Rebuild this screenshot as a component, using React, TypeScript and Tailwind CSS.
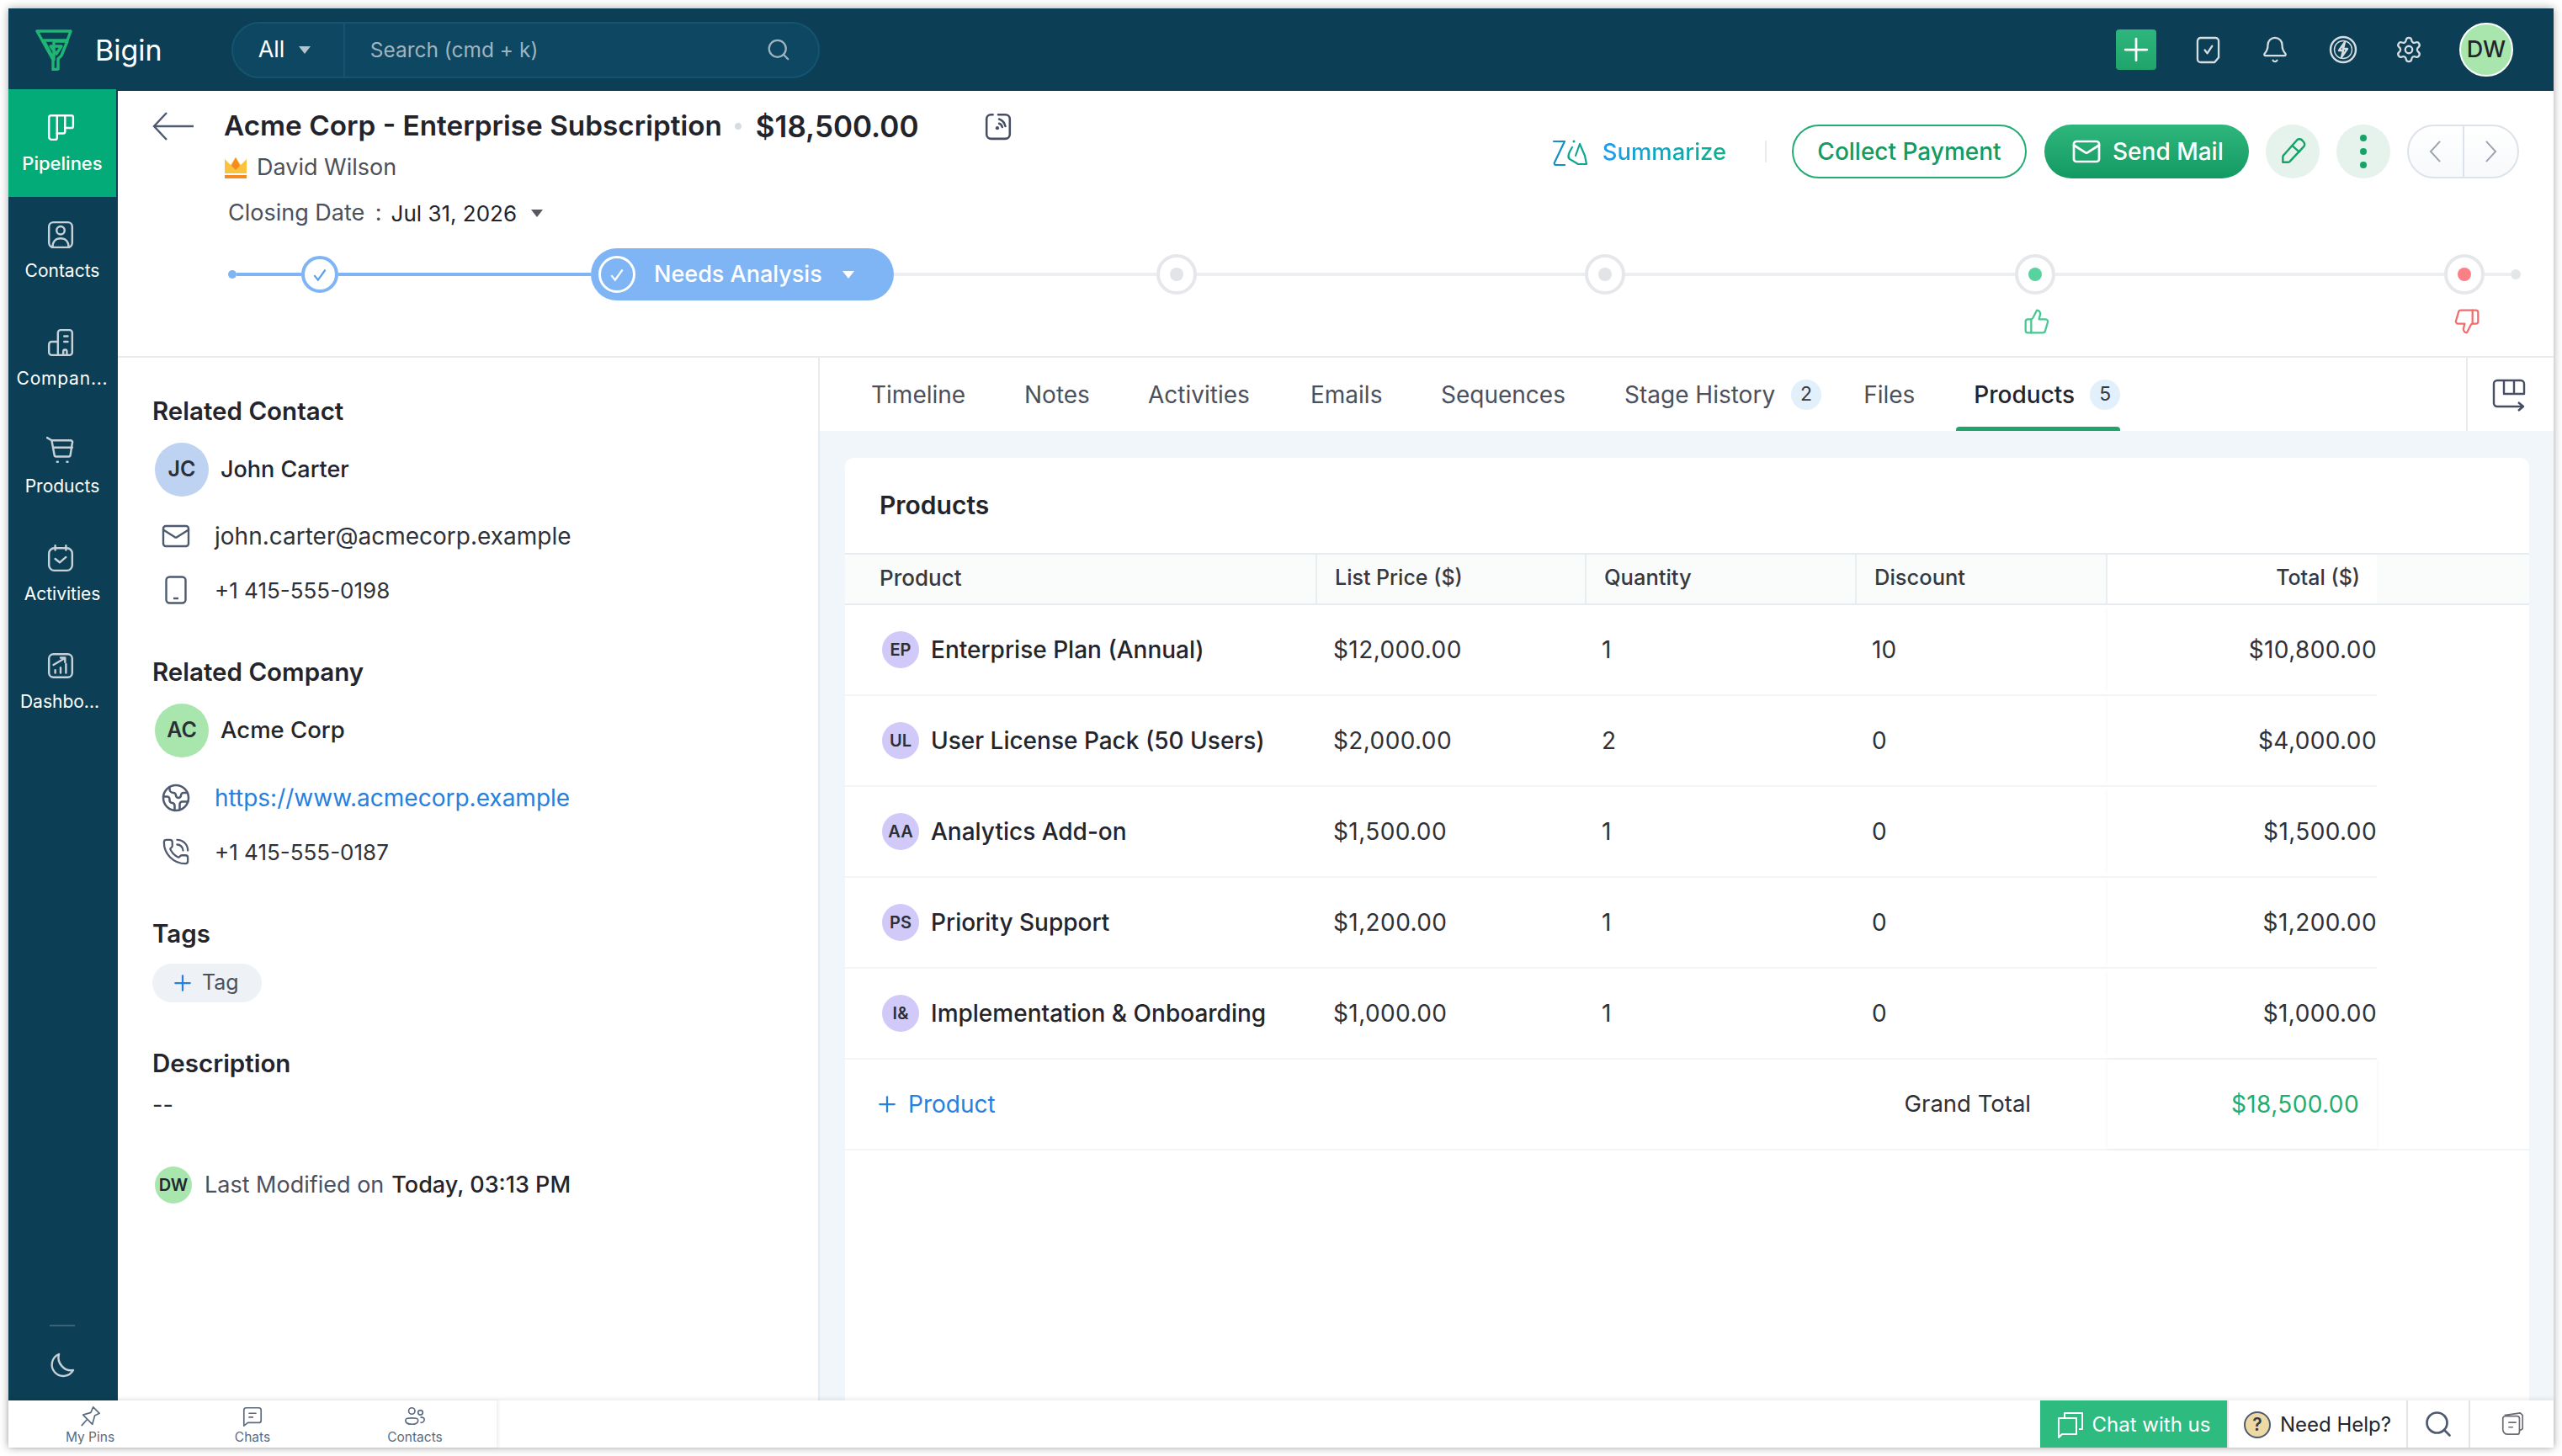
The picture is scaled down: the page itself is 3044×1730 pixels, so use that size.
import type { ReactNode } from "react";
import { Bell, Earth, Mail, PhoneCall, Plus, Search, Settings, ThumbsDown, ThumbsUp } from "lucide-react";

type NavItem = { label: string; icon: ReactNode; active?: boolean; labelClass?: string };

type ProductRow = {
  code: string;
  name: string;
  price: string;
  qty: string;
  discount: string;
  total: string;
};

const font = "font-['Inter','Liberation_Sans',sans-serif]";

const navItems: NavItem[] = [
  {
    label: "Pipelines",
    active: true,
    labelClass: "text-[22px] font-medium -mt-[2px]",
    icon: (
      <>
        <path d="M3 5a2 2 0 0 1 2-2h23a2 2 0 0 1 2 2v10a2 2 0 0 1-2 2h-7" />
        <path d="M21 3v18a2 2 0 0 1-2 2h-7" />
        <path d="M12 3v25a2 2 0 0 1-2 2H6a3 3 0 0 1-3-3V5" />
      </>
    ),
  },
  {
    label: "Contacts",
    icon: (
      <>
        <rect x="3" y="2" width="26" height="28" rx="5" />
        <circle cx="16" cy="11" r="4.5" />
        <path d="M7 30c0-7 4-10 9-10s9 3 9 10" />
      </>
    ),
  },
  {
    label: "Compan...",
    labelClass: "tracking-[0.8px]",
    icon: (
      <>
        <path d="M13 30V5a3 3 0 0 1 3-3h10a3 3 0 0 1 3 3v22a3 3 0 0 1-3 3H6a3 3 0 0 1-3-3v-9a3 3 0 0 1 3-3h7" />
        <path d="M20 9h4M20 15h4M19 30v-4a2 2 0 0 1 4 0v4" />
      </>
    ),
  },
  {
    label: "Products",
    icon: (
      <>
        <path d="M1 2l5 3 3 16a2 2 0 0 0 2 2h14a2 2 0 0 0 2-2l2-13a2 2 0 0 0-2-3H6" />
        <path d="M8 13h21M12 29h1M23 29h1" />
      </>
    ),
  },
  {
    label: "Activities",
    icon: (
      <>
        <rect x="3" y="5" width="26" height="25" rx="6" />
        <path d="M10 2v5M22 2v5M10 17l5 4 7-6" />
      </>
    ),
  },
  {
    label: "Dashbo...",
    labelClass: "mr-[6px]",
    icon: (
      <>
        <rect x="3" y="3" width="26" height="26" rx="5" />
        <path d="M10 24v-3M16 24v-6M22 24V14M8 15l12-7M16 7h5v5" />
      </>
    ),
  },
];

const tabs = [
  { label: "Timeline", width: "w-[182px]" },
  { label: "Notes", width: "w-[147px]" },
  { label: "Activities", width: "w-[193px]" },
  { label: "Emails", width: "w-[155px]" },
  { label: "Sequences", width: "w-[218px]" },
];

const rows: ProductRow[] = [
  { code: "EP", name: "Enterprise Plan (Annual)", price: "$12,000.00", qty: "1", discount: "10", total: "$10,800.00" },
  { code: "UL", name: "User License Pack (50 Users)", price: "$2,000.00", qty: "2", discount: "0", total: "$4,000.00" },
  { code: "AA", name: "Analytics Add-on", price: "$1,500.00", qty: "1", discount: "0", total: "$1,500.00" },
  { code: "PS", name: "Priority Support", price: "$1,200.00", qty: "1", discount: "0", total: "$1,200.00" },
  { code: "I&", name: "Implementation & Onboarding", price: "$1,000.00", qty: "1", discount: "0", total: "$1,000.00" },
];

const columns = "grid grid-cols-[561px_320px_321px_298px_320px]";

function Caret({ className }: { className: string }) {
  return (
    <svg viewBox="0 0 14 9" className={className}>
      <polygon points="0,0 14,0 7,9" fill="currentColor" />
    </svg>
  );
}

function TopBar() {
  return (
    <div className="flex h-[98px] shrink-0 items-center bg-[#0c3f55]">
      <svg viewBox="0 0 46 50" className="ml-[32px] h-[50px] w-[46px]" fill="none" stroke="#1fb573" strokeWidth="3.4" strokeLinejoin="round">
        <path d="M2 3h40l-4 11H10l12 23V15h16l-7 17-4 4v12l-6 1V37z" />
        <path d="M18 21h13l-6 9z" />
      </svg>
      <span className="ml-[25px] text-[34px] text-white">Bigin</span>
      <div className="ml-[82px] flex h-[67px] w-[699px] items-center rounded-full border-2 border-[#155470] bg-[#0e4761]">
        <div className="flex h-full w-[133px] items-center border-r-2 border-[#155470] pl-[30px]">
          <span className="text-[27px] text-white">All</span>
          <Caret className="ml-[17px] h-[9px] w-[14px] text-[#b4c4cc]" />
        </div>
        <span className="ml-[30px] flex-1 text-[24.5px] text-[#9fb4bf]">Search (cmd + k)</span>
        <Search className="mr-[32px] h-[30px] w-[30px] text-[#9fb4bf]" strokeWidth={1.8} />
      </div>
      <div className="ml-auto flex items-center pr-[48px]">
        <div className="flex h-[48px] w-[48px] items-center justify-center rounded-[4px] bg-gradient-to-b from-[#2eb67d] to-[#1fa56c]">
          <Plus className="h-[44px] w-[44px] text-white" strokeWidth={1.5} />
        </div>
        <svg viewBox="0 0 30 34" className="ml-[47px] h-[33px] w-[29px]" fill="none" stroke="#d5dde1" strokeWidth="2.4" strokeLinecap="round" strokeLinejoin="round">
          <path d="M6 2h18a4 4 0 0 1 4 4v20l-5 6H6a4 4 0 0 1-4-4V6a4 4 0 0 1 4-4z" />
          <path d="M11 17l3 4 6-9" />
        </svg>
        <Bell className="ml-[48px] h-[34px] w-[34px] text-[#d5dde1]" strokeWidth={1.6} />
        <svg viewBox="0 0 34 34" className="ml-[47px] h-[34px] w-[34px]" fill="none" stroke="#d5dde1" strokeWidth="2.4" strokeLinejoin="round">
          <circle cx="17" cy="17" r="15" />
          <circle cx="17" cy="17" r="10.5" strokeWidth="1.4" />
          <path d="M19 8l-7 10h5l-2 8 7-10h-5z" />
        </svg>
        <Settings className="ml-[44px] h-[34px] w-[34px] text-[#d5dde1]" strokeWidth={1.6} />
        <div className="ml-[43px] flex h-[64px] w-[64px] items-center justify-center rounded-full border-2 border-white bg-[#a8e6ae] text-[27px] font-medium text-[#22262b]">
          DW
        </div>
      </div>
    </div>
  );
}

function Sidebar() {
  return (
    <aside className="relative z-10 flex w-[130px] shrink-0 flex-col bg-[#0c3f55]">
      <div className="-mt-[2px] flex flex-col">
        {navItems.map((item) => (
          <div
            key={item.label}
            className={`flex h-[128px] w-[128px] flex-col items-center pt-[28px] ${item.active ? "bg-[#03ab78]" : ""}`}
          >
            <svg
              viewBox="0 0 32 32"
              className="mr-[4px] h-[34px] w-[34px]"
              fill="none"
              stroke={item.active ? "#ffffff" : "#c5d1d6"}
              strokeWidth="2.3"
              strokeLinecap="round"
              strokeLinejoin="round"
            >
              {item.icon}
            </svg>
            <span className={`mt-[13px] text-[21px] leading-[26px] text-white ${item.labelClass ?? ""}`}>{item.label}</span>
          </div>
        ))}
      </div>
      <div className="mt-auto flex flex-col items-center pb-[26px] pr-[2px]">
        <div className="h-[2px] w-[30px] bg-[#3a6377]" />
        <svg viewBox="0 0 32 32" className="mt-[30px] h-[32px] w-[32px]" fill="none" stroke="#c5d1d6" strokeWidth="2.4" strokeLinejoin="round">
          <path d="M12 3a13.500 13.500 0 1 0 17 19C19 24 9 14 12 3z" />
        </svg>
      </div>
    </aside>
  );
}

function GreyNode() {
  return (
    <div className="flex h-[48px] w-[48px] shrink-0 items-center justify-center rounded-full border-[4px] border-[#e5e7ea] bg-white">
      <div className="h-[16px] w-[16px] rounded-full bg-[#e2e4e8]" />
    </div>
  );
}

function StageBar() {
  return (
    <div className="ml-[131px] flex h-[62px] items-center">
      <div className="h-[10px] w-[10px] shrink-0 rounded-full bg-[#7fb5f5]" />
      <div className="h-[4px] w-[77px] bg-[#7fb5f5]" />
      <div className="flex h-[44px] w-[44px] shrink-0 items-center justify-center rounded-full border-[4px] border-[#7fb5f5] bg-white">
        <svg viewBox="0 0 20 20" className="h-[22px] w-[22px]" fill="none" stroke="#5d9fe8" strokeWidth="2">
          <path d="M4 11l4 5 8-11" />
        </svg>
      </div>
      <div className="h-[4px] w-[300px] bg-[#7fb5f5]" />
      <div className="flex h-[62px] w-[360px] shrink-0 items-center rounded-full bg-[#7fb5f5] pl-[9px]">
        <div className="flex h-[44px] w-[44px] items-center justify-center rounded-full border-[3px] border-white">
          <svg viewBox="0 0 20 20" className="h-[22px] w-[22px]" fill="none" stroke="#ffffff" strokeWidth="2">
            <path d="M4 11l4 5 8-11" />
          </svg>
        </div>
        <span className="ml-[22px] text-[27px] font-medium text-white">Needs Analysis</span>
        <Caret className="ml-[24px] h-[9px] w-[14px] text-white" />
      </div>
      <div className="h-[4px] w-[312px] bg-[#eceef1]" />
      <GreyNode />
      <div className="h-[4px] w-[461px] bg-[#eceef1]" />
      <GreyNode />
      <div className="h-[4px] w-[463px] bg-[#eceef1]" />
      <div className="relative flex h-[48px] w-[48px] shrink-0 items-center justify-center rounded-full border-[4px] border-[#e5e7ea] bg-white">
        <div className="h-[16px] w-[16px] rounded-full bg-[#58d3a0]" />
        <ThumbsUp className="absolute top-[60px] left-[6px] h-[32px] w-[32px] text-[#45c990]" strokeWidth={1.7} />
      </div>
      <div className="h-[4px] w-[462px] bg-[#eceef1]" />
      <div className="relative flex h-[48px] w-[48px] shrink-0 items-center justify-center rounded-full border-[4px] border-[#e5e7ea] bg-white">
        <div className="h-[16px] w-[16px] rounded-full bg-[#fb8086]" />
        <ThumbsDown className="absolute top-[60px] left-[7px] h-[32px] w-[32px] text-[#f26d6d]" strokeWidth={1.7} />
      </div>
      <div className="h-[4px] w-[31px] bg-[#eceef1]" />
      <div className="h-[12px] w-[12px] shrink-0 rounded-full bg-[#e4e7ea]" />
    </div>
  );
}

function DealHeader() {
  return (
    <header className="flex h-[317px] shrink-0 flex-col border-b-2 border-[#e8ecef]">
      <div className="flex h-[187px] justify-between">
        <div className="flex pl-[41px] pt-[25px]">
          <svg viewBox="0 0 50 34" className="h-[34px] w-[50px]" fill="none" stroke="#4d5a70" strokeWidth="2.4">
            <path d="M49 17H2M17 1L2 17l15 16" />
          </svg>
          <div className="ml-[35px] flex flex-col">
            <div className="flex h-[34px] items-center">
              <span className="text-[33.3px] font-semibold text-[#23242b]">Acme Corp - Enterprise Subscription</span>
              <span className="ml-[15px] h-[8px] w-[8px] rounded-full bg-[#d5dde3]" />
              <span className="ml-[17px] text-[35px] font-semibold text-[#23242b]">$18,500.00</span>
              <svg viewBox="0 0 32 32" className="ml-[78px] h-[34px] w-[34px]" fill="none" stroke="#454e63" strokeWidth="2.4" strokeLinecap="round">
                <path d="M10 3H8a5 5 0 0 0-5 5v17a5 5 0 0 0 5 5h16a5 5 0 0 0 5-5V8a5 5 0 0 0-5-5h-8" />
                <path d="M17 8c3 1 6 4 7 8M17 13c2 .5 3 2 3.500 4" />
                <circle cx="15" cy="18" r="2" fill="#454e63" stroke="none" />
              </svg>
            </div>
            <div className="mt-[14px] flex h-[36px] items-center">
              <svg viewBox="0 0 28 26" className="h-[26px] w-[28px]">
                <path d="M1 3l7 7 6-9 6 9 7-7v17H1z" fill="#fbc23d" />
                <path d="M14 1l5 10-5 5-5-5z" fill="#f68b1f" />
                <rect x="1" y="22" width="26" height="4" fill="#f68b1f" />
              </svg>
              <span className="ml-[11px] text-[27px] text-[#4c505b]">David Wilson</span>
            </div>
            <div className="mt-[18px] flex h-[36px] items-center pl-[5px]">
              <span className="text-[27px] text-[#4c505b]">Closing Date&nbsp;&thinsp;:</span>
              <span className="ml-[11px] text-[26px] text-[#23242b]">Jul 31, 2026</span>
              <Caret className="ml-[17px] h-[9px] w-[14px] text-[#55585f]" />
            </div>
          </div>
        </div>
        <div className="flex items-center self-start pr-[41px] pt-[40px]">
          <svg viewBox="0 0 44 32" className="mt-[2px] h-[32px] w-[44px]" fill="none" strokeWidth="2.2" strokeLinejoin="round" strokeLinecap="round">
            <path d="M2 3h13L3 28a2 2 0 0 0 2 3h10" stroke="#1290c4" />
            <path d="M24 10c-4 6-6 12-3 14l10 6h10l-2-10-6-14-5 14" stroke="#10a694" />
            <circle cx="26" cy="3" r="1.500" fill="#10a694" />
          </svg>
          <span className="mt-[2px] ml-[16px] bg-gradient-to-r from-[#1e9cf0] to-[#10b08a] bg-clip-text text-[27.4px] font-medium text-transparent">Summarize</span>
          <div className="ml-[46px] h-[26px] w-[2px] bg-[#e8ebee]" />
          <button className="ml-[30px] h-[64px] w-[279px] rounded-full border-2 border-[#22ab73] text-[28px] font-medium text-[#129b63]">Collect Payment</button>
          <button className="ml-[21px] flex h-[64px] w-[243px] items-center rounded-full bg-gradient-to-b from-[#2eb67d] to-[#129a62] pl-[32px] text-[28px] font-medium text-white">
            <Mail className="h-[36px] w-[36px]" strokeWidth={1.8} />
            <span className="ml-[13px]">Send Mail</span>
          </button>
          <div className="ml-[20px] flex h-[64px] w-[64px] items-center justify-center rounded-full bg-[#e6f2ec]">
            <svg viewBox="0 0 32 32" className="h-[34px] w-[34px]" fill="none" stroke="#17a268" strokeWidth="2.3" strokeLinejoin="round">
              <path d="M21 3a4 4 0 0 1 6 1l1 1a4 4 0 0 1 0 6L13 27a3 3 0 0 1-2 1H5v-6a3 3 0 0 1 1-2z" />
              <path d="M15 9l9 8" />
            </svg>
          </div>
          <div className="ml-[20px] flex h-[64px] w-[64px] flex-col items-center justify-center gap-[8px] rounded-full bg-[#e6f2ec]">
            <span className="h-[8px] w-[8px] rounded-full bg-[#17a268]" />
            <span className="h-[8px] w-[8px] rounded-full bg-[#17a268]" />
            <span className="h-[8px] w-[8px] rounded-full bg-[#17a268]" />
          </div>
          <div className="ml-[20px] flex h-[64px] w-[133px] rounded-full border-2 border-[#dde3ea] bg-gradient-to-b from-white to-[#f7f9fb]">
            <div className="flex flex-1 items-center justify-center border-r-2 border-[#dde3ea]">
              <svg viewBox="0 0 16 30" className="h-[28px] w-[15px]" fill="none" stroke="#9ba1ad" strokeWidth="2">
                <path d="M14 2L2 15l12 13" />
              </svg>
            </div>
            <div className="flex flex-1 items-center justify-center">
              <svg viewBox="0 0 16 30" className="h-[28px] w-[15px]" fill="none" stroke="#9ba1ad" strokeWidth="2">
                <path d="M2 2l12 13L2 28" />
              </svg>
            </div>
          </div>
        </div>
      </div>
      <StageBar />
    </header>
  );
}

function SectionTitle({ children }: { children: ReactNode }) {
  return <h2 className="text-[29.5px] font-semibold leading-[36px] text-[#24252c]">{children}</h2>;
}

function DetailRow({ icon, children }: { icon: ReactNode; children: ReactNode }) {
  return (
    <div className="flex h-[36px] items-center">
      <div className="ml-[8px] flex w-[40px] justify-center">{icon}</div>
      <div className="ml-[26px] text-[#2f3138]">{children}</div>
    </div>
  );
}

function RecordAvatar({ text, color }: { text: string; color: string }) {
  return (
    <div className={`ml-[3px] flex h-[64px] w-[64px] items-center justify-center rounded-full text-[25px] font-semibold text-[#2c2f36] ${color}`}>
      {text}
    </div>
  );
}

function RelatedPanel() {
  return (
    <div className="w-[834px] shrink-0 border-r-2 border-[#e8ecef] pl-[41px] pt-[45px]">
      <SectionTitle>Related Contact</SectionTitle>
      <div className="mt-[20px] flex items-center">
        <RecordAvatar text="JC" color="bg-[#bdd3f1]" />
        <span className="ml-[14px] text-[27px] font-medium text-[#24252c]">John Carter</span>
      </div>
      <div className="mt-[29px]">
        <DetailRow icon={<Mail className="h-[36px] w-[36px] text-[#4d5a70]" strokeWidth={1.6} />}>
          <span className="text-[28px]">john.carter@acmecorp.example</span>
        </DetailRow>
      </div>
      <div className="mt-[28px]">
        <DetailRow
          icon={
            <svg viewBox="0 0 26 34" className="h-[34px] w-[26px]" fill="none" stroke="#4d5a70" strokeWidth="2.4">
              <rect x="1.500" y="1.500" width="23" height="31" rx="4" />
              <path d="M10 27h6" />
            </svg>
          }
        >
          <span className="text-[26px]">+1 415-555-0198</span>
        </DetailRow>
      </div>
      <div className="mt-[61px]">
        <SectionTitle>Related Company</SectionTitle>
      </div>
      <div className="mt-[20px] flex items-center">
        <RecordAvatar text="AC" color="bg-[#a8e6ae]" />
        <span className="ml-[14px] text-[27.5px] font-medium text-[#24252c]">Acme Corp</span>
      </div>
      <div className="mt-[30px]">
        <DetailRow icon={<Earth className="h-[36px] w-[36px] text-[#4d5a70]" strokeWidth={1.7} />}>
          <span className="text-[28px] text-[#2680dd]">https://www.acmecorp.example</span>
        </DetailRow>
      </div>
      <div className="mt-[28px]">
        <DetailRow icon={<PhoneCall className="h-[34px] w-[34px] text-[#4d5a70]" strokeWidth={1.6} />}>
          <span className="text-[26px]">+1 415-555-0187</span>
        </DetailRow>
      </div>
      <div className="mt-[61px]">
        <SectionTitle>Tags</SectionTitle>
      </div>
      <div className="mt-[18px] flex h-[46px] w-[130px] items-center rounded-full bg-[#eef2f6] pl-[21px]">
        <Plus className="h-[30px] w-[30px] text-[#2680dd]" strokeWidth={1.8} />
        <span className="ml-[8px] text-[25px] text-[#4c505b]">Tag</span>
      </div>
      <div className="mt-[54px]">
        <SectionTitle>Description</SectionTitle>
      </div>
      <p className="mt-[14px] text-[27px] leading-[36px] text-[#2f3138]">--</p>
      <div className="mt-[55px] flex items-center">
        <div className="ml-[3px] flex h-[44px] w-[44px] items-center justify-center rounded-full bg-[#a8e6ae] text-[20px] font-semibold text-[#22262b]">
          DW
        </div>
        <span className="ml-[15px] text-[27px] text-[#4c505b]">Last Modified on</span>
        <span className="ml-[9px] text-[27px] font-medium text-[#24252c]">Today, 03:13 PM</span>
      </div>
    </div>
  );
}

function ProductsTable() {
  return (
    <div className="mt-[30px] ml-[30px] mr-[29px] flex-1 rounded-t-[10px] bg-white">
      <h2 className="flex h-[113px] items-center pl-[41px] text-[30px] font-semibold text-[#24252c]">Products</h2>
      <div className="h-[62px] border-y-2 border-[#e6ecf0] bg-[#fafcfc]">
        <div className={`${columns} h-full items-center text-[26px] font-medium text-[#363941]`}>
          <div className="flex h-full items-center border-r-2 border-[#e9eef1] pb-[3px] pl-[41px]">Product</div>
          <div className="flex h-full items-center border-r-2 border-[#e9eef1] pb-[3px] pl-[21px] text-[25px]">List Price ($)</div>
          <div className="flex h-full items-center border-r-2 border-[#e9eef1] pb-[3px] pl-[21px] text-[25.5px]">Quantity</div>
          <div className="flex h-full items-center border-r-2 border-[#e9eef1] pb-[3px] pl-[21px] text-[25.5px]">Discount</div>
          <div className="flex h-full items-center justify-end bg-white pb-[3px] pr-[20px] text-[25px]">Total ($)</div>
        </div>
      </div>
      {rows.map((row) => (
        <div key={row.code} className={`${columns} h-[108px] w-[1820px] items-center border-b-2 border-[#f1f5f8] text-[28px] text-[#2f3138]`}>
          <div className="flex items-center pl-[44px]">
            <div className="flex h-[44px] w-[44px] items-center justify-center rounded-full bg-[#d1caf9] text-[20px] font-semibold text-[#2c2f36]">
              {row.code}
            </div>
            <span className="ml-[14px] font-medium text-[#24252c]">{row.name}</span>
          </div>
          <div className="pl-[19px] tracking-[0.4px]">{row.price}</div>
          <div className="pl-[18px]">{row.qty}</div>
          <div className="pl-[18px]">{row.discount}</div>
          <div className="flex h-full items-center justify-end tracking-[0.4px] shadow-[-3px_0_4px_-3px_rgba(0,0,0,0.05)]">{row.total}</div>
        </div>
      ))}
      <div className={`${columns} h-[108px] items-center border-b-2 border-[#f1f5f8] text-[28px]`}>
        <div className="col-span-3 flex items-center pl-[35px] text-[#2680dd]">
          <Plus className="h-[30px] w-[30px]" strokeWidth={1.8} />
          <span className="ml-[10px]">Product</span>
        </div>
        <div className="pr-[91px] text-right text-[27.5px] text-[#2f3138]">Grand Total</div>
        <div className="flex h-full items-center justify-end pr-[21px] tracking-[0.4px] text-[#1fae6f] shadow-[0_0_6px_rgba(0,0,0,0.05)]">$18,500.00</div>
      </div>
    </div>
  );
}

function DetailTabs() {
  return (
    <div className="flex min-w-0 flex-1 flex-col">
      <div className="flex h-[87px] shrink-0 items-center bg-white pl-[61px]">
        {tabs.map((tab) => (
          <span key={tab.label} className={`${tab.width} text-[28px] text-[#4c505b]`}>
            {tab.label}
          </span>
        ))}
        <span className="text-[28px] text-[#4c505b]">Stage History</span>
        <span className="ml-[19px] flex h-[36px] w-[36px] items-center justify-center rounded-full bg-[#e2f0fb] text-[23px] text-[#363941]">2</span>
        <span className="ml-[50px] text-[28px] text-[#4c505b]">Files</span>
        <div className="relative ml-[70px] flex h-full items-center">
          <span className="text-[28px] font-medium text-[#24252c]">Products</span>
          <span className="ml-[18px] flex h-[36px] w-[36px] items-center justify-center rounded-full bg-[#e2f0fb] text-[23px] text-[#363941]">5</span>
          <div className="absolute right-0 bottom-0 -left-[21px] h-[5px] rounded-t-[4px] bg-[#1fa56c]" />
        </div>
        <div className="ml-auto flex h-full w-[104px] items-center justify-center border-l-2 border-[#e8ecef] pr-[4px]">
          <svg viewBox="0 0 40 40" className="h-[40px] w-[40px]" fill="none" stroke="#454e63" strokeWidth="2.4" strokeLinejoin="round">
            <path d="M2 30V7a4 4 0 0 1 4-4h28a4 4 0 0 1 4 4v12H14V3M26 3v16M2 30a4 4 0 0 0 4 4h30M31 29l6 5-6 5" />
          </svg>
        </div>
      </div>
      <div className="flex min-h-0 flex-1 flex-col bg-[#f1f6fa] pt-[2px]">
        <ProductsTable />
      </div>
    </div>
  );
}

function BottomBar() {
  return (
    <footer className="relative z-20 flex h-[56px] shrink-0 bg-white shadow-[0_-2px_5px_rgba(0,0,0,0.08)]">
      <div className="flex w-[580px] text-[#5b6b80] shadow-[2px_0_4px_rgba(0,0,0,0.08)]">
        <div className="flex w-[194px] flex-col items-center pt-[6px]">
          <svg viewBox="0 0 28 28" className="h-[26px] w-[26px]" fill="none" stroke="#5b6b80" strokeWidth="1.8" strokeLinejoin="round">
            <path d="M18 2l8 8-6 3-3 11-12-12 10-3zM10 18l-7 8" />
          </svg>
          <span className="mt-[3px] text-[15.5px] leading-[18px]">My Pins</span>
        </div>
        <div className="flex w-[192px] flex-col items-center pt-[6px]">
          <svg viewBox="0 0 28 28" className="h-[26px] w-[26px]" fill="none" stroke="#5b6b80" strokeWidth="1.8" strokeLinejoin="round">
            <path d="M3 26V6a3 3 0 0 1 3-3h16a3 3 0 0 1 3 3v13a3 3 0 0 1-3 3H8zM9 10h10M9 15h6" />
          </svg>
          <span className="mt-[3px] text-[15.5px] leading-[18px]">Chats</span>
        </div>
        <div className="flex w-[194px] flex-col items-center pt-[6px]">
          <svg viewBox="0 0 28 28" className="h-[26px] w-[26px]" fill="none" stroke="#5b6b80" strokeWidth="1.8">
            <circle cx="10" cy="7" r="4" />
            <circle cx="21" cy="9" r="3" />
            <path d="M2 19c0-3 3-3 8-3s8 0 8 3-3 5-8 5-8-2-8-5zM21 15c3 0 5 1 5 3s-2 4-5 4" />
          </svg>
          <span className="mt-[3px] text-[15.5px] leading-[18px]">Contacts</span>
        </div>
      </div>
      <div className="ml-auto flex h-full">
        <div className="flex w-[222px] items-center justify-center bg-[#2dbb7f] pt-[1px] text-[24px] text-white">
          <svg viewBox="0 0 32 32" className="h-[36px] w-[32px]" fill="none" stroke="#ffffff" strokeWidth="2" strokeLinejoin="round">
            <path d="M9 8V2h21v19h-4" />
            <path d="M2 8h21v19H6l-4 4z" />
          </svg>
          <span className="ml-[10px]">Chat with us</span>
        </div>
        <div className="flex w-[215px] items-center justify-center border-x-2 border-[#e4e4e4] pt-[1px] text-[24px] text-[#24252c]">
          <div className="flex h-[32px] w-[32px] items-center justify-center rounded-full border-2 border-[#4d5a70] bg-[#eed9a5] text-[21px] font-semibold text-[#333a4a]">?</div>
          <span className="ml-[11px]">Need Help?</span>
        </div>
        <div className="flex w-[74px] items-center justify-center border-r-2 border-[#e4e4e4]">
          <Search className="h-[36px] w-[36px] text-[#4d5a70]" strokeWidth={1.8} />
        </div>
        <div className="flex w-[99px] items-center justify-center">
          <svg viewBox="0 0 32 32" className="h-[30px] w-[30px]" fill="none" stroke="#6c6e74" strokeWidth="1.8" strokeLinejoin="round">
            <path d="M6 5l20-3 3 3v17l-3 2M4 8v15a6 6 0 0 0 6 6h12a3 3 0 0 0 3-3V9a3 3 0 0 0-3-3H8a4 4 0 0 0-4 2zM11 14h10M11 20h6" />
          </svg>
        </div>
      </div>
    </footer>
  );
}

export default function App() {
  return (
    <div className={`h-[1730px] w-[3044px] bg-white p-[10px] ${font}`}>
      <div className="flex h-[1710px] flex-col bg-white shadow-[0_0_10px_rgba(0,0,0,0.35)]">
        <TopBar />
        <div className="flex min-h-0 flex-1">
          <Sidebar />
          <main className="flex min-w-0 flex-1 flex-col">
            <DealHeader />
            <div className="flex min-h-0 flex-1">
              <RelatedPanel />
              <DetailTabs />
            </div>
          </main>
        </div>
        <BottomBar />
      </div>
    </div>
  );
}
